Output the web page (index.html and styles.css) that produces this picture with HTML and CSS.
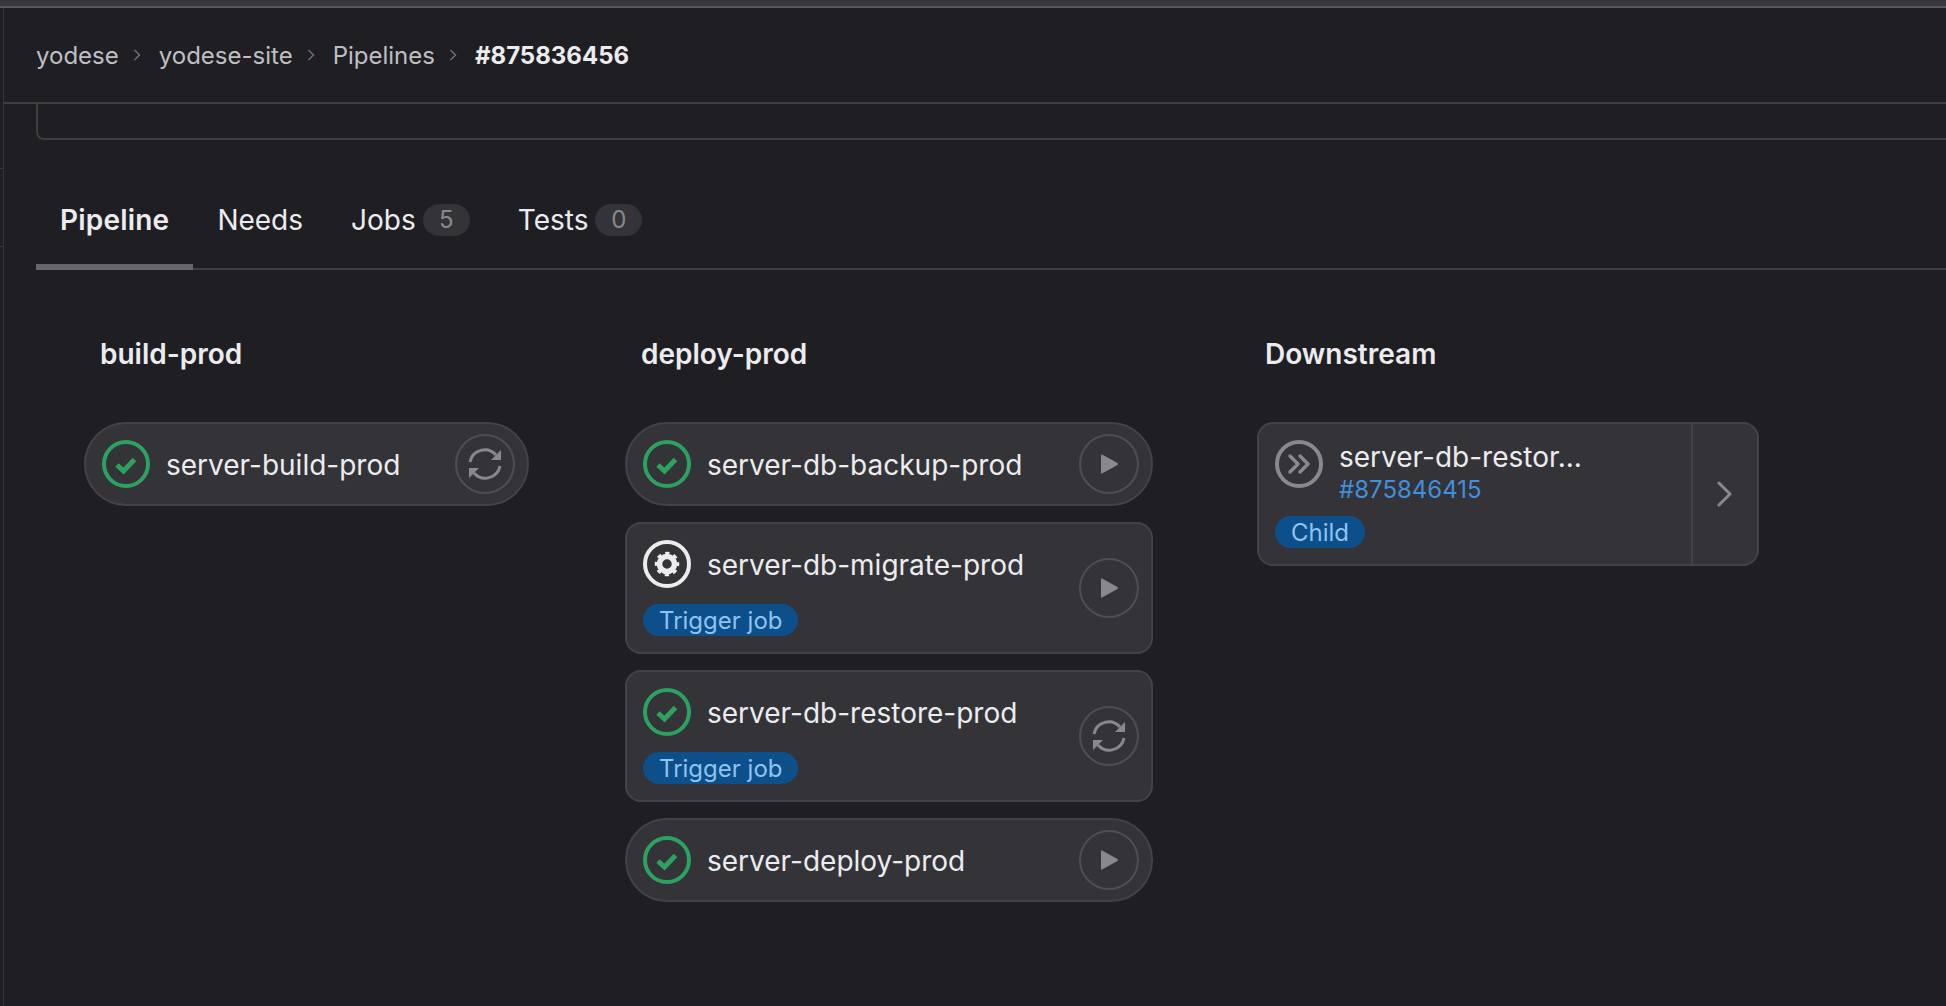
FILE: index.html
```html
<!DOCTYPE html>
<html lang="en">
  <head>
    <meta charset="UTF-8" />
    <meta name="viewport" content="width=device-width, initial-scale=1.0" />
    <title>Pipeline #875836456</title>
    <link rel="stylesheet" href="styles.css">
  </head>
  <body>
    <svg class="icon-defs" aria-hidden="true">
      <symbol id="icon-success" viewBox="0 0 48 48">
        <circle cx="24" cy="24" r="22" fill="none" stroke="#2da160" stroke-width="4" />
        <path d="M15 25 L21.5 31 L32.5 19.5" fill="none" stroke="#2da160" stroke-width="5" />
      </symbol>
      <symbol id="icon-manual" viewBox="0 0 48 48">
        <circle cx="24" cy="24" r="22" fill="none" stroke="#ececef" stroke-width="4" />
        <circle cx="24" cy="24" r="7.5" fill="none" stroke="#ececef" stroke-width="5.5" />
        <circle cx="24" cy="24" r="10.5" fill="none" stroke="#ececef" stroke-width="3.5" stroke-dasharray="4.12 4.12" stroke-dashoffset="2.06" />
      </symbol>
      <symbol id="icon-downstream" viewBox="0 0 48 48">
        <circle cx="24" cy="24" r="22" fill="none" stroke="#89888d" stroke-width="4" />
        <path d="M15 16 L23 24 L15 32 M25 16 L33 24 L25 32" fill="none" stroke="#89888d" stroke-width="3.5" stroke-linecap="round" stroke-linejoin="round" />
      </symbol>
      <symbol id="icon-retry" viewBox="2 2 56 56">
        <path d="M15 28 A15 15 0 0 1 41 21 M45 32 A15 15 0 0 1 19 39" fill="none" stroke="#89888d" stroke-width="3" />
        <path d="M36 26 H46 V16 Z M14 34 H24 L14 44 Z" fill="#89888d" />
      </symbol>
      <symbol id="icon-play" viewBox="2 2 56 56">
        <path d="M23 20.5 L38.5 29 Q39.5 30 38.5 31 L23 39.5 Q22 40 22 38.5 V21.5 Q22 20 23 20.5 Z" fill="#89888d" />
      </symbol>
    </svg>

    <div class="topbar"></div>
    <div class="app">
      <div class="rail">
        <span class="rail-mark"></span>
        <span class="rail-mark rail-mark-2"></span>
      </div>
      <main class="content">
        <nav class="breadcrumb">
          <a>yodese</a>
          <svg class="crumb-sep" viewBox="0 0 8 12"><path d="M1.5 1 L6.5 6 L1.5 11" /></svg>
          <a>yodese-site</a>
          <svg class="crumb-sep" viewBox="0 0 8 12"><path d="M1.5 1 L6.5 6 L1.5 11" /></svg>
          <a>Pipelines</a>
          <svg class="crumb-sep" viewBox="0 0 8 12"><path d="M1.5 1 L6.5 6 L1.5 11" /></svg>
          <a class="crumb-current">#875836456</a>
        </nav>

        <div class="info-card"></div>

        <ul class="tabs">
          <li class="tab active">Pipeline</li>
          <li class="tab">Needs</li>
          <li class="tab">Jobs <span class="count">5</span></li>
          <li class="tab">Tests <span class="count">0</span></li>
        </ul>

        <div class="graph">
          <section class="stage stage-build">
            <h3 class="stage-title">build-prod</h3>
            <div class="job pill">
              <div class="job-main">
                <div class="job-row">
                  <svg class="status"><use href="#icon-success" /></svg>
                  <span class="job-name">server-build-prod</span>
                </div>
              </div>
              <button class="action"><svg><use href="#icon-retry" /></svg></button>
            </div>
          </section>

          <section class="stage stage-deploy">
            <h3 class="stage-title">deploy-prod</h3>
            <div class="job pill">
              <div class="job-main">
                <div class="job-row">
                  <svg class="status"><use href="#icon-success" /></svg>
                  <span class="job-name">server-db-backup-prod</span>
                </div>
              </div>
              <button class="action"><svg><use href="#icon-play" /></svg></button>
            </div>
            <div class="job">
              <div class="job-main">
                <div class="job-row">
                  <svg class="status"><use href="#icon-manual" /></svg>
                  <span class="job-name">server-db-migrate-prod</span>
                </div>
                <span class="badge">Trigger job</span>
              </div>
              <button class="action"><svg><use href="#icon-play" /></svg></button>
            </div>
            <div class="job">
              <div class="job-main">
                <div class="job-row">
                  <svg class="status"><use href="#icon-success" /></svg>
                  <span class="job-name">server-db-restore-prod</span>
                </div>
                <span class="badge">Trigger job</span>
              </div>
              <button class="action"><svg><use href="#icon-retry" /></svg></button>
            </div>
            <div class="job pill">
              <div class="job-main">
                <div class="job-row">
                  <svg class="status"><use href="#icon-success" /></svg>
                  <span class="job-name">server-deploy-prod</span>
                </div>
              </div>
              <button class="action"><svg><use href="#icon-play" /></svg></button>
            </div>
          </section>

          <section class="stage stage-downstream">
            <h3 class="stage-title">Downstream</h3>
            <div class="downstream">
              <div class="downstream-main">
                <div class="downstream-row">
                  <svg class="status"><use href="#icon-downstream" /></svg>
                  <div class="downstream-text">
                    <span class="job-name">server-db-restor...</span>
                    <a class="pipeline-link">#875846415</a>
                  </div>
                </div>
                <span class="badge">Child</span>
              </div>
              <div class="expand">
                <svg viewBox="0 0 16 26"><path d="M2 2 L13 13 L2 24" /></svg>
              </div>
            </div>
          </section>
        </div>
      </main>
    </div>
  </body>
</html>
```

FILE: styles.css
```css
html,
body {
  height: 100%;
}
body {
  margin: 0;
  overflow: hidden;
  background-color: #1f1f23;
  color: #ececef;
  font-family: Inter, "Liberation Sans", sans-serif;
  font-size: 28px;
}
.icon-defs {
  display: block;
  width: 0;
  height: 0;
}
.topbar {
  height: 6px;
  background-color: #37383b;
  border-bottom: 2px solid #58585b;
}
.app {
  display: flex;
  height: 998px;
}
.rail {
  box-sizing: border-box;
  flex: none;
  width: 4px;
  padding-top: 160px;
  border-right: 1px solid #343438;
}
.rail-mark {
  display: block;
  height: 1px;
  background-color: #3a3a3e;
}
.rail-mark-2 {
  margin-top: 77px;
}
.content {
  flex: 1;
  min-width: 0;
}

/* breadcrumb */
.breadcrumb {
  display: flex;
  align-items: center;
  height: 94px;
  padding-left: 32px;
  border-bottom: 2px solid #3f3f42;
  color: #bfbfc3;
  font-size: 24px;
}
.crumb-sep {
  width: 8px;
  height: 12px;
  margin: 0 18px 0 14px;
  fill: none;
  stroke: #737278;
  stroke-width: 1.4;
}
.crumb-current {
  color: #ececef;
  font-weight: 700;
}

.info-card {
  height: 34px;
  margin-left: 32px;
  border-left: 2px solid #3f3f42;
  border-bottom: 2px solid #3f3f42;
  border-bottom-left-radius: 8px;
}

/* tabs */
.tabs {
  display: flex;
  height: 92px;
  margin: 36px 0 0 32px;
  padding: 0;
  list-style: none;
  border-bottom: 2px solid #3f3f42;
}
.tab {
  box-sizing: border-box;
  display: flex;
  align-items: center;
  height: 94px;
  padding: 0 24px;
  border-bottom: 6px solid transparent;
  font-size: 28px;
}
.tab.active {
  border-bottom-color: #66666b;
  font-weight: 600;
  letter-spacing: 0.2px;
}
.count {
  box-sizing: border-box;
  min-width: 47px;
  height: 32px;
  margin-left: 7px;
  border-radius: 16px;
  background-color: #333338;
  color: #89888d;
  font-size: 24px;
  line-height: 32px;
  text-align: center;
}

/* graph */
.graph {
  display: grid;
  grid-template-columns: 541px 632px 502px;
  padding: 68px 0 0 80px;
}
.stage-title {
  margin: 0 0 52px 16px;
  font-size: 28px;
  font-weight: 600;
  line-height: 32px;
}
.stage-downstream .stage-title {
  margin-left: 8px;
}
.stage-build .job {
  width: 445px;
}
.stage-deploy .job {
  width: 528px;
}

.job {
  box-sizing: border-box;
  display: flex;
  align-items: center;
  justify-content: space-between;
  margin-bottom: 16px;
  padding: 16px 12px 16px 16px;
  border: 2px solid #434347;
  border-radius: 16px;
  background-color: #333338;
}
.job.pill {
  border-radius: 42px;
}
.job-main {
  display: flex;
  flex-direction: column;
  align-items: flex-start;
}
.job-row {
  display: flex;
  align-items: center;
}
.job-row .job-name {
  padding-top: 2px;
}
.status {
  flex: none;
  width: 48px;
  height: 48px;
}
.job-name {
  margin-left: 16px;
  font-size: 28px;
  line-height: 34px;
  white-space: nowrap;
}
.action {
  display: block;
  flex: none;
  width: 60px;
  height: 60px;
  margin: -6px 0;
  padding: 0;
  border: 2px solid #4f4f53;
  border-radius: 50%;
  background: none;
}
.action svg {
  display: block;
  width: 56px;
  height: 56px;
}
.badge {
  box-sizing: border-box;
  height: 32px;
  margin-top: 16px;
  padding: 0 16px;
  border-radius: 16px;
  background-color: #0d4f8b;
  color: #8fc3f0;
  font-size: 24px;
  line-height: 33px;
}

/* downstream card */
.downstream {
  box-sizing: border-box;
  display: flex;
  width: 502px;
  height: 144px;
  border: 2px solid #434347;
  border-radius: 16px;
  background-color: #333338;
}
.downstream-main {
  box-sizing: border-box;
  display: flex;
  flex-direction: column;
  align-items: flex-start;
  width: 434px;
  padding: 16px;
  border-right: 2px solid #434347;
}
.downstream-row {
  display: flex;
}
.downstream-text {
  display: flex;
  flex-direction: column;
}
.pipeline-link {
  margin-left: 16px;
  color: #428fdc;
  font-size: 24px;
  line-height: 32px;
}
.downstream .badge {
  margin-top: 10px;
}
.expand {
  display: flex;
  flex: 1;
  align-items: center;
  justify-content: center;
}
.expand svg {
  width: 16px;
  height: 26px;
  fill: none;
  stroke: #89888d;
  stroke-width: 3;
  stroke-linecap: round;
  stroke-linejoin: round;
}
```
